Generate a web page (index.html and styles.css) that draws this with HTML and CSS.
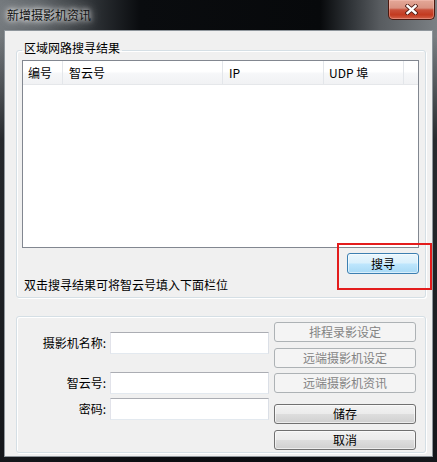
FILE: index.html
```html
<!DOCTYPE html>
<html lang="zh-CN">
<head>
<meta charset="utf-8">
<title>新增摄影机资讯</title>
<link rel="stylesheet" href="styles.css">
</head>
<body>
<div class="window">
  <div class="titlebar">
    <span class="title">新增摄影机资讯</span>
    <div class="close">
      <svg width="13" height="11" viewBox="0 0 13 11" aria-hidden="true">
        <path d="M2.5 2 L10.5 9 M10.5 2 L2.5 9" stroke="#4e1a12" stroke-width="4.2" stroke-linecap="square" fill="none"/>
        <path d="M2.5 2 L10.5 9 M10.5 2 L2.5 9" stroke="#ffffff" stroke-width="2.4" stroke-linecap="square" fill="none"/>
      </svg>
    </div>
  </div>
  <div class="client">
    <fieldset class="group group-search">
      <legend>区域网路搜寻结果</legend>
      <div class="listview">
        <div class="lv-header">
          <div class="col c1">编号</div>
          <div class="col c2">智云号</div>
          <div class="col c3">IP</div>
          <div class="col c4">UDP 埠</div>
          <div class="col c5"></div>
        </div>
        <div class="lv-body"></div>
      </div>
      <div class="search-row">
        <div class="highlight"><button class="btn btn-default btn-search">搜寻</button></div>
      </div>
      <p class="hint">双击搜寻结果可将智云号填入下面栏位</p>
    </fieldset>
    <fieldset class="group group-form">
      <div class="fields">
        <div class="row row-name"><label class="lbl">摄影机名称:</label><input class="txt" type="text"></div>
        <div class="row row-id"><label class="lbl">智云号:</label><input class="txt" type="text"></div>
        <div class="row row-pw"><label class="lbl">密码:</label><input class="txt" type="text"></div>
      </div>
      <div class="actions">
        <button class="btn btn-disabled" disabled>排程录影设定</button>
        <button class="btn btn-disabled a2" disabled>远端摄影机设定</button>
        <button class="btn btn-disabled a3" disabled>远端摄影机资讯</button>
        <button class="btn btn-normal a4">储存</button>
        <button class="btn btn-normal a5">取消</button>
      </div>
    </fieldset>
  </div>
</div>
</body>
</html>
```
FILE: styles.css
```css
* { box-sizing: border-box; }
html, body { margin: 0; padding: 0; background: #0b0d10; }
body {
  font-family: "Noto Sans CJK SC", "Liberation Sans", sans-serif;
  font-size: 12px;
  color: #000;
}
.window {
  width: 437px;
  height: 462px;
  display: flex;
  flex-direction: column;
  padding: 0 4px 5px 4px;
  background:
    linear-gradient(to bottom, rgba(12,14,18,0) 0px, rgba(12,14,18,0) 36px, rgba(12,14,18,0.75) 140px, rgba(12,14,18,0.92) 462px),
    linear-gradient(90deg, #74797d 0px, #5f6468 40px, #2c3034 95px, #0a0c0f 140px, #07090b 320px, #2f3337 350px, #585c60 380px, #7b8084 437px);
}
.titlebar {
  height: 30px;
  display: flex;
  align-items: flex-start;
  justify-content: space-between;
  margin: 0 -4px 0 -4px;
}
.title {
  margin: 7px 0 0 7px;
  line-height: 16px;
  color: #111;
  text-shadow: 0 0 5px #fff, 0 0 9px rgba(255,255,255,0.8), 0 0 14px rgba(255,255,255,0.5);
}
.close {
  width: 47px;
  height: 20px;
  margin-right: 2px;
  border: 1px solid #4a1910;
  border-top: none;
  border-radius: 0 0 5px 5px;
  background: linear-gradient(#e4a898 0%, #d99382 42%, #c9503a 52%, #c33a20 78%, #d2624a 100%);
  box-shadow: inset 0 0 0 1px rgba(255,210,200,0.35);
  display: flex;
  align-items: center;
  justify-content: center;
}
.client {
  flex: 1;
  background: #f0f0f0;
  border: 1px solid #8f969c;
  display: flex;
  flex-direction: column;
}
.group {
  border: 1px solid #d5dfe5;
  border-radius: 3px;
  box-shadow: inset 1px 1px 0 #fff, 1px 1px 0 #fff;
  min-width: 0;
}
.group-search {
  margin: 9px 6px 0 11px;
  padding: 0 6px 4px 5px;
}
.group-search legend {
  padding: 0 2px 4px;
  line-height: 16px;
  margin-left: 0;
}
.listview {
  height: 188px;
  border: 1px solid #828790;
  background: #fff;
  display: flex;
  flex-direction: column;
}
.lv-header {
  height: 24px;
  display: flex;
  background: linear-gradient(#ffffff 0%, #ffffff 45%, #f6f7f9 55%, #f1f2f4 100%);
  border-bottom: 1px solid #e5e7ea;
}
.col {
  line-height: 24px;
  padding-left: 6px;
  border-right: 1px solid #e3e6ea;
  white-space: nowrap;
}
.c1 { width: 40px; padding-left: 5px; }
.c2 { width: 160px; }
.c3 { width: 101px; }
.c4 { width: 80px; padding-left: 5px; }
.c5 { flex: 1; border-right: none; }
.lv-body { flex: 1; }
.search-row {
  display: flex;
  justify-content: flex-end;
  margin-top: 5px;
}
.highlight { position: relative; }
.highlight::after {
  content: "";
  position: absolute;
  top: -10px;
  left: -10px;
  right: -13px;
  bottom: -16px;
  border: 2px solid #e31c1c;
  pointer-events: none;
}
.btn {
  font: inherit;
  font-size: 12px;
  line-height: 16px;
  padding: 0;
  margin: 0;
  border-radius: 3px;
  display: flex;
  align-items: center;
  justify-content: center;
}
.btn-default {
  width: 72px;
  height: 21px;
  border: 1px solid #3c7fb1;
  background: linear-gradient(#eaf6fd 0%, #d9f0fc 48%, #bee6fd 52%, #a7d9f5 100%);
  box-shadow: inset 0 0 0 1px rgba(255,255,255,0.55);
  color: #000;
}
.hint {
  margin: 3px 0 0 2px;
  line-height: 16px;
}
.group-form {
  margin: 18px 6px 0 11px;
  padding: 0 9px 2px 0;
  display: flex;
}
.fields {
  width: 252px;
  padding-top: 15px;
  display: flex;
  flex-direction: column;
}
.row {
  display: flex;
  align-items: center;
  height: 22px;
}
.row-id { margin-top: 18px; }
.row-pw { margin-top: 4px; }
.lbl {
  width: 93px;
  padding-right: 4px;
  text-align: right;
  line-height: 16px;
  white-space: nowrap;
}
.txt {
  width: 159px;
  height: 22px;
  margin: 0;
  padding: 0 3px;
  border: 1px solid;
  border-color: #abadb3 #dbdfe6 #e3e9ef #e2e3ea;
  background: #fff;
  font: inherit;
  outline: none;
}
.actions {
  margin-left: 5px;
  padding-top: 5px;
  width: 142px;
  display: flex;
  flex-direction: column;
}
.actions .btn { width: 142px; height: 20px; }
.actions .a2 { margin-top: 6px; }
.actions .a3 { margin-top: 5px; }
.actions .a4 { margin-top: 11px; }
.actions .a5 { margin-top: 6px; }
.btn-disabled {
  border: 1px solid #adb2b5;
  background: #f4f4f4;
  color: #838383;
}
.btn-normal {
  border: 1px solid #707070;
  background: linear-gradient(#f2f2f2 0%, #ebebeb 48%, #dddddd 52%, #cfcfcf 100%);
  box-shadow: inset 0 0 0 1px rgba(255,255,255,0.6);
  color: #000;
}
```
